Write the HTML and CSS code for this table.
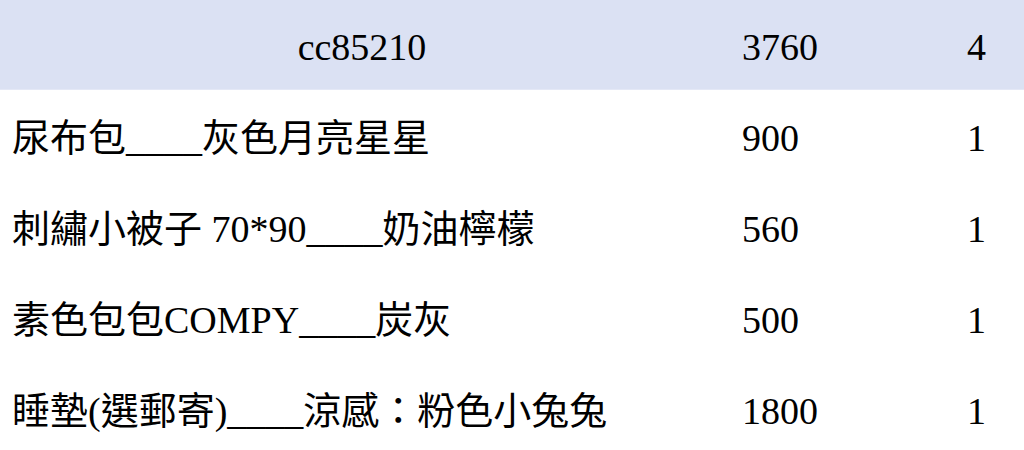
FILE: index.html
```html
<!DOCTYPE html>
<html lang="zh-Hant">
<head>
<meta charset="utf-8">
<link rel="stylesheet" href="styles.css">
</head>
<body>
<div class="table">
  <div class="row head">
    <div class="c name">cc85210</div>
    <div class="c price">3760</div>
    <div class="c qty">4</div>
  </div>
  <div class="row">
    <div class="c name">尿布包____灰色月亮星星</div>
    <div class="c price">900</div>
    <div class="c qty">1</div>
  </div>
  <div class="row">
    <div class="c name">刺繡小被子 70*90____奶油檸檬</div>
    <div class="c price">560</div>
    <div class="c qty">1</div>
  </div>
  <div class="row">
    <div class="c name">素色包包COMPY____炭灰</div>
    <div class="c price">500</div>
    <div class="c qty">1</div>
  </div>
  <div class="row">
    <div class="c name">睡墊(選郵寄)____涼感：粉色小兔兔</div>
    <div class="c price">1800</div>
    <div class="c qty">1</div>
  </div>
</div>
</body>
</html>
```
FILE: styles.css
```css
html, body {
  margin: 0;
  padding: 0;
  background: #ffffff;
}
body {
  width: 1024px;
  height: 450px;
  overflow: hidden;
  font-family: "Liberation Serif", "Noto Sans CJK TC", serif;
  font-size: 38px;
  color: #000000;
}
.table {
  display: flex;
  flex-direction: column;
}
.row {
  display: grid;
  grid-template-columns: 724px 216px 84px;
  height: 91px;
  align-items: center;
}
.row.head {
  height: 90px;
  background: #dbe1f3;
  border-bottom: 1px solid #e4e8f6;
  box-sizing: border-box;
}
.c {
  white-space: nowrap;
  line-height: 1;
  padding-top: 4px;
}
.name {
  padding-left: 12px;
}
.head .name {
  padding-left: 0;
  text-align: center;
}
.price {
  padding-left: 18px;
}
.qty {
  text-align: right;
  padding-right: 38px;
}
```
